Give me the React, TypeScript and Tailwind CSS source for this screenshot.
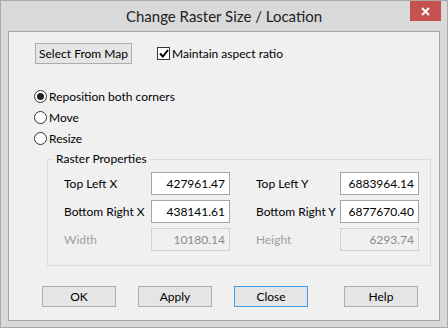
import React from 'react';

const font = { fontFamily: 'Lato, "Noto Sans", sans-serif' };

function Btn({ label, focused, w = 'w-[74px]' }: { label: string; focused?: boolean; w?: string }) {
  return (
    <div
      className={`${w} h-[21px] flex items-center justify-center whitespace-nowrap text-[12px] text-black bg-[#e5e5e5] border ${
        focused ? 'border-[#3c9bec]' : 'border-[#adadad]'
      }`}
    >
      {label}
    </div>
  );
}

function Radio({ label, checked }: { label: string; checked?: boolean }) {
  return (
    <div className="flex items-center h-[21px]">
      <div className="w-[13px] h-[13px] rounded-full border border-[#333] bg-white flex items-center justify-center">
        {checked && <div className="w-[7px] h-[7px] rounded-full bg-[#222]" />}
      </div>
      <span className="ml-[2px] text-[12px] text-black">{label}</span>
    </div>
  );
}

function Field({ label, value, disabled }: { label: string; value: string; disabled?: boolean }) {
  return (
    <div className="flex items-center h-[23px]">
      <span className={`flex-1 whitespace-nowrap text-[12px] ${disabled ? 'text-[#a0a0a0]' : 'text-black'}`}>{label}</span>
      <div
        className={`w-[79px] h-[23px] flex items-center justify-end pr-[4px] text-[12px] border ${
          disabled ? 'bg-[#f0f0f0] border-[#d0d0d0] text-[#8a8a8a]' : 'bg-white border-[#a5a5a5] text-black'
        }`}
      >
        {value}
      </div>
    </div>
  );
}

export default function App() {
  return (
    <div style={font} className="w-[448px] h-[328px] bg-[#d9d9d9] border border-[#a9a9a9] flex flex-col">
      {/* Title bar */}
      <div className="relative h-[30px] flex items-center justify-center">
        <span className="text-[15px] text-[#222] mt-[1px]">Change Raster Size / Location</span>
        <div className="absolute right-[6px] top-0 w-[31px] h-[20px] bg-[#c75050] flex items-center justify-center">
          <svg width="9" height="9" viewBox="0 0 9 9">
            <path d="M1 1L8 8M8 1L1 8" stroke="white" strokeWidth="2" />
          </svg>
        </div>
      </div>

      {/* Client area */}
      <div className="mx-[7px] h-[290px] border border-[#a6a6a6] bg-[#f0f0f0] flex flex-col">
        <div className="flex items-center mt-[11px] ml-[26px]">
          <Btn label="Select From Map" w="w-[97px]" />
          <div className="ml-[25px] flex items-center">
            <div className="w-[13px] h-[13px] border border-[#333] bg-white flex items-center justify-center">
              <svg width="10" height="9" viewBox="0 0 10 9">
                <path d="M1 4.5L3.8 7.5L9 1" stroke="#000" strokeWidth="2" fill="none" />
              </svg>
            </div>
            <span className="ml-[2px] text-[12px] text-black">Maintain aspect ratio</span>
          </div>
        </div>

        <div className="mt-[22px] ml-[25px] flex flex-col">
          <Radio label="Reposition both corners" checked />
          <Radio label="Move" />
          <Radio label="Resize" />
        </div>

        {/* Raster Properties group */}
        <fieldset className="ml-[38px] w-[384px] mt-[1px] h-[116px] border border-[#dcdcdc] pl-[16px] pt-[4px]">
          <legend className="px-[2px] ml-[-10px] text-[12px] text-black">Raster Properties</legend>
          <div className="flex gap-[26px]">
            <div className="w-[166px] flex flex-col gap-[5px]">
              <Field label="Top Left X" value="427961.47" />
              <Field label="Bottom Right X" value="438141.61" />
              <Field label="Width" value="10180.14" disabled />
            </div>
            <div className="w-[163px] flex flex-col gap-[5px]">
              <Field label="Top Left Y" value="6883964.14" />
              <Field label="Bottom Right Y" value="6877670.40" />
              <Field label="Height" value="6293.74" disabled />
            </div>
          </div>
        </fieldset>

        <div className="mt-[20px] flex items-center pl-[33px]">
          <Btn label="OK" />
          <div className="ml-[22px]">
            <Btn label="Apply" />
          </div>
          <div className="ml-[22px]">
            <Btn label="Close" focused />
          </div>
          <div className="ml-[36px]">
            <Btn label="Help" />
          </div>
        </div>
      </div>
    </div>
  );
}
